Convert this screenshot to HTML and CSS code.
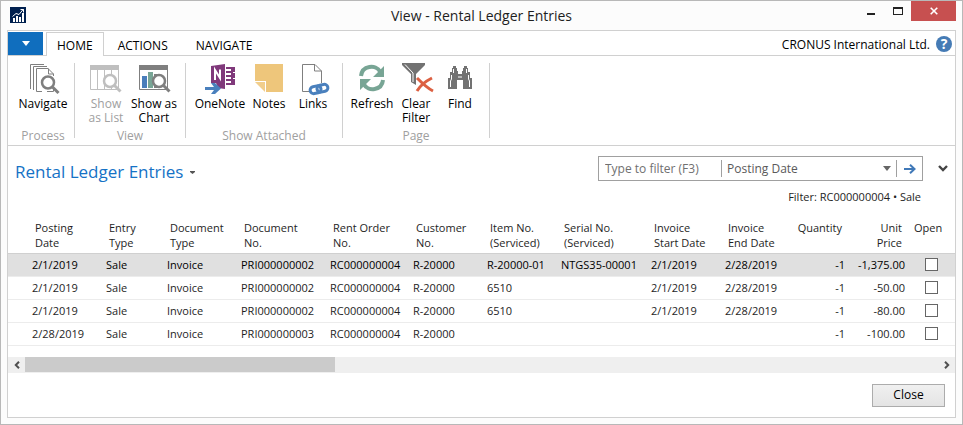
FILE: index.html
```html
<!DOCTYPE html>
<html lang="en">
<head>
<meta charset="utf-8">
<title>View - Rental Ledger Entries</title>
<link rel="stylesheet" href="styles.css">
</head>
<body>
<div class="window">
  <header class="titlebar">
    <svg class="app-icon" width="16" height="16" viewBox="0 0 16 16" aria-hidden="true">
      <rect width="16" height="16" fill="#00204f"/>
      <path d="M3 11h2v4H3zM6 9h2v6H6zM9 10h2v5H9zM12 6h2v9h-2z" fill="#fff"/>
      <path d="M2.500 9.500L6 6.500l3 1L13.500 2M10.500 2.500h3v3" fill="none" stroke="#fff" stroke-width="1"/>
    </svg>
    <h1 class="window-title">View - Rental Ledger Entries</h1>
    <div class="window-controls">
      <button class="wbtn" aria-label="Minimize"><svg width="10" height="10" viewBox="0 0 10 10"><path d="M1 7h8v2H1z" fill="#222"/></svg></button>
      <button class="wbtn" aria-label="Maximize"><svg width="10" height="10" viewBox="0 0 10 10"><path d="M0 1h10v8H0zM1 3v5h8V3z" fill="#222" fill-rule="evenodd"/></svg></button>
      <button class="wbtn wbtn-close" aria-label="Close window"><svg width="8" height="8" viewBox="0 0 8 8"><path d="M.7.7l6.600 6.600M7.300.7L.7 7.300" stroke="#fff" stroke-width="1.600"/></svg></button>
    </div>
  </header>

  <div class="panel">
    <nav class="tabs">
      <button class="app-menu" aria-label="Application menu"><svg width="8" height="5" viewBox="0 0 8 5"><path d="M0 0h8L4 5z" fill="#fff"/></svg></button>
      <button class="tab tab-active">HOME</button>
      <button class="tab">ACTIONS</button>
      <button class="tab">NAVIGATE</button>
      <span class="company">CRONUS International Ltd.</span>
      <button class="help" aria-label="Help">?</button>
    </nav>

    <div class="ribbon">
      <section class="group">
        <div class="group-buttons">
          <button class="rbtn rbtn-wide">
            <svg width="32" height="32" viewBox="0 0 32 32" fill="none" stroke="#7f7f7f">
              <path d="M3.500 27V2.500H17M6.500 28V4.500H20"/>
              <path d="M15 29.500H9.500v-23H21l5.500 5.500v2M26.500 26v3.500H20"/>
              <path d="M21.500 6.500V12h5"/>
              <circle cx="21" cy="20.500" r="6" stroke-width="2.500" fill="#fff"/>
              <path d="M25.500 25l6 6" stroke-width="3"/>
            </svg>
            <span>Navigate</span>
          </button>
        </div>
        <h2 class="group-name">Process</h2>
      </section>

      <section class="group">
        <div class="group-buttons">
          <button class="rbtn rbtn-wide" disabled>
            <svg width="32" height="32" viewBox="0 0 32 32" fill="none" stroke="#bfbfbf">
              <path d="M.5 7v20.500h28V7M7.500 7v20M14.500 7v20M21.500 7v20"/>
              <path d="M0 3h29v5H0z" fill="#bfbfbf" stroke="none"/>
              <circle cx="20" cy="19" r="6" stroke-width="2.500" fill="#fff"/>
              <path d="M24.500 23.500l6 6" stroke-width="3"/>
            </svg>
            <span>Show<br>as List</span>
          </button>
          <button class="rbtn rbtn-wide">
            <svg width="32" height="32" viewBox="0 0 32 32" fill="none" stroke="#7f7f7f">
              <path d="M1.500 7v20.500h28V7"/>
              <path d="M1 3h29v5H1z" fill="#7f7f7f" stroke="none"/>
              <path d="M4 14h5v12H4z" fill="#4a7ebb" stroke="none"/>
              <path d="M10 10h5v16h-5z" fill="#78a595" stroke="none"/>
              <path d="M16 12h5v14h-5z" fill="#7f7f7f" stroke="none"/>
              <circle cx="21" cy="19" r="6" stroke-width="2.500" fill="#fff"/>
              <path d="M25.500 23.500l6 6" stroke-width="3"/>
            </svg>
            <span>Show as<br>Chart</span>
          </button>
        </div>
        <h2 class="group-name">View</h2>
      </section>

      <section class="group">
        <div class="group-buttons">
          <button class="rbtn rbtn-onenote">
            <svg width="32" height="32" viewBox="0 0 32 32">
              <path d="M7 4l14-2v25l-7-1-2-5H7z" fill="#80397b"/>
              <path d="M22 5h9v18h-9v-2h5v-2h-5v-2h5v-2h-5v-2h5v-2h-5V9h5V7h-5z" fill="#80397b"/>
              <path d="M29 10h2v1h-2zM29 16h2v1h-2z" fill="#fff"/>
              <path d="M11 18V8l5 8V7.500" fill="none" stroke="#fff" stroke-width="2"/>
              <path d="M1 25h9l-3-4h4l6 5.500-6 5.500H7l3-4H1z" fill="#4a80bd"/>
            </svg>
            <span>OneNote</span>
          </button>
          <button class="rbtn">
            <svg width="32" height="32" viewBox="0 0 32 32">
              <path d="M2 2h28v28H13V19H2z" fill="#eec67b"/>
              <path d="M2 20h10v10z" fill="#f1ce8c"/>
            </svg>
            <span>Notes</span>
          </button>
          <button class="rbtn">
            <svg width="32" height="32" viewBox="0 0 32 32" fill="none">
              <path d="M12 29.500H5.500v-27H18l6.500 6.500v12M17.500 2.500V9h7" stroke="#7f7f7f"/>
              <g stroke="#4a80bd" stroke-width="3" transform="rotate(-12 22 27)">
                <rect x="13" y="23.500" width="11" height="7" rx="3.500"/>
                <rect x="20" y="23.500" width="11" height="7" rx="3.500"/>
              </g>
            </svg>
            <span>Links</span>
          </button>
        </div>
        <h2 class="group-name">Show Attached</h2>
      </section>

      <section class="group">
        <div class="group-buttons">
          <button class="rbtn">
            <svg width="32" height="32" viewBox="0 0 32 32" fill="none">
              <path d="M5 14C6 3.500 20 2 24 9.500M27 18C26 28.500 12 30 8 22.500" stroke="#78a595" stroke-width="4"/>
              <path d="M28 4v11H17zM4 28V17h11z" fill="#78a595"/>
            </svg>
            <span>Refresh</span>
          </button>
          <button class="rbtn">
            <svg width="32" height="32" viewBox="0 0 32 32" fill="none">
              <path d="M2 1h23v2l-9 9v11l-5-3v-8L2 3z" fill="#727272"/>
              <path d="M5 2.500l8 8.500v9" stroke="#fff"/>
              <path d="M17 16c4 4 10 10 16 13M32 16c-6 3-12 8-15 13" stroke="#dc6042" stroke-width="3"/>
            </svg>
            <span>Clear<br>Filter</span>
          </button>
          <button class="rbtn">
            <svg width="32" height="32" viewBox="0 0 32 32">
              <path d="M9 4h3v2h1v3h1v3h4V9h1V6h1V4h3v2h1v4h2v6h2v11h-9v-9h-6v9H4V16h2v-6h2V6h1z" fill="#727272"/>
              <path d="M9.500 7v4M22.500 7v4M7.500 13v4l-1 2v6M24.500 13v4l1 2v6M14 15h4" fill="none" stroke="#fff"/>
            </svg>
            <span>Find</span>
          </button>
        </div>
        <h2 class="group-name">Page</h2>
      </section>
    </div>

    <div class="page-head">
      <button class="page-title">Rental Ledger Entries
        <svg width="5" height="3" viewBox="0 0 5 3"><path d="M0 0h5v1L2.500 3 0 1z" fill="#555"/></svg>
      </button>
      <div class="filter-area">
        <form class="filter-box">
          <input class="filter-input" type="text" placeholder="Type to filter (F3)" aria-label="Filter value">
          <span class="filter-field">
            <select class="filter-select" aria-label="Filter field"><option>Posting Date</option></select>
            <svg width="8" height="5" viewBox="0 0 8 5"><path d="M0 0h8L4 5z" fill="#666"/></svg>
          </span>
          <button class="filter-go" type="button" aria-label="Apply filter"><svg width="12" height="10" viewBox="0 0 12 10" fill="none" stroke="#4079b8" stroke-width="2"><path d="M0 5h10M6 .8L10.500 5 6 9.200"/></svg></button>
        </form>
        <button class="expand" aria-label="Expand filter pane"><svg width="10" height="7" viewBox="0 0 10 7" fill="none" stroke="#444" stroke-width="2.400"><path d="M1 1l4 4 4-4"/></svg></button>
        <p class="filter-text">Filter: RC000000004 • Sale</p>
      </div>
    </div>

    <table class="entries">
      <colgroup>
        <col class="c-mark"><col class="c-date"><col class="c-entry"><col class="c-date"><col class="c-docno"><col class="c-order"><col class="c-date"><col class="c-date"><col class="c-serial"><col class="c-date"><col class="c-end"><col class="c-qty"><col class="c-price"><col>
      </colgroup>
      <thead>
        <tr><td></td><th>Posting<br>Date</th><th>Entry<br>Type</th><th>Document<br>Type</th><th>Document<br>No.</th><th>Rent Order<br>No.</th><th>Customer<br>No.</th><th>Item No.<br>(Serviced)</th><th>Serial No.<br>(Serviced)</th><th>Invoice<br>Start Date</th><th>Invoice<br>End Date</th><th class="num">Quantity</th><th class="num">Unit<br>Price</th><th>Open</th></tr>
      </thead>
      <tbody>
        <tr class="selected"><td></td><td>2/1/2019</td><td>Sale</td><td>Invoice</td><td>PRI000000002</td><td>RC000000004</td><td>R-20000</td><td>R-20000-01</td><td>NTGS35-00001</td><td>2/1/2019</td><td>2/28/2019</td><td class="num">-1</td><td class="num">-1,375.00</td><td class="check"><input type="checkbox" aria-label="Open"></td></tr>
        <tr><td></td><td>2/1/2019</td><td>Sale</td><td>Invoice</td><td>PRI000000002</td><td>RC000000004</td><td>R-20000</td><td>6510</td><td></td><td>2/1/2019</td><td>2/28/2019</td><td class="num">-1</td><td class="num">-50.00</td><td class="check"><input type="checkbox" aria-label="Open"></td></tr>
        <tr><td></td><td>2/1/2019</td><td>Sale</td><td>Invoice</td><td>PRI000000002</td><td>RC000000004</td><td>R-20000</td><td>6510</td><td></td><td>2/1/2019</td><td>2/28/2019</td><td class="num">-1</td><td class="num">-80.00</td><td class="check"><input type="checkbox" aria-label="Open"></td></tr>
        <tr><td></td><td>2/28/2019</td><td>Sale</td><td>Invoice</td><td>PRI000000003</td><td>RC000000004</td><td>R-20000</td><td></td><td></td><td></td><td></td><td class="num">-1</td><td class="num">-100.00</td><td class="check"><input type="checkbox" aria-label="Open"></td></tr>
      </tbody>
    </table>

    <div class="hscroll">
      <button class="scroll-arrow" aria-label="Scroll left"><svg width="6" height="8" viewBox="0 0 6 8" fill="none" stroke="#505050" stroke-width="2"><path d="M5 .8L1.800 4 5 7.200"/></svg></button>
      <div class="track"><div class="thumb"></div></div>
      <button class="scroll-arrow" aria-label="Scroll right"><svg width="6" height="8" viewBox="0 0 6 8" fill="none" stroke="#505050" stroke-width="2"><path d="M1 .8L4.200 4 1 7.200"/></svg></button>
    </div>

    <footer class="footer"><button class="close-btn">Close</button></footer>
  </div>
</div>
</body>
</html>
```
FILE: styles.css
```css
* { box-sizing: border-box; }

body {
  margin: 0;
  background: #fcfcfc;
  color: #1e1e1e;
  font: 12px/16px "Open Sans", "Noto Sans", sans-serif;
}

button, input, select {
  margin: 0;
  padding: 0;
  border: 0;
  background: none;
  color: inherit;
  font: inherit;
}

svg { display: block; flex: none; }

.window {
  border: 1px solid #b8b8b8;
  padding: 0 6px 6px;
  background: #fcfcfc;
}

/* Title bar */
.titlebar {
  display: grid;
  grid-template-columns: 1fr auto 1fr;
  height: 29px;
}
.app-icon { margin: 6px 0 0 3px; }
.window-title {
  margin: 0;
  font-size: 14px;
  line-height: 30px;
  font-weight: 400;
}
.window-controls { display: flex; justify-content: flex-end; align-items: flex-start; }
.wbtn {
  display: flex;
  align-items: center;
  justify-content: center;
  width: 27px;
  height: 20px;
}
.wbtn-close { width: 45px; background: #c75050; }

.panel {
  border: 1px solid #d0d0d0;
  background: #fff;
}

/* Tabs */
.tabs {
  display: flex;
  align-items: stretch;
  height: 25px;
  padding-top: 1px;
  border-bottom: 1px solid #d0d0d0;
  color: #000;
}
.app-menu {
  display: flex;
  align-items: center;
  justify-content: center;
  width: 35px;
  margin-right: 3px;
  background: #106ebe;
}
.tab { padding: 4px 14px 0; }
.tab-active {
  margin-bottom: -1px;
  padding: 2px 10px 0;
  border: 1px solid #d0d0d0;
  border-bottom: 0;
  background: #fff;
}
.company { margin-left: auto; line-height: 26px; }
.help {
  align-self: center;
  width: 16px;
  height: 16px;
  margin: 0 3px 0 6px;
  border-radius: 50%;
  background: #457bb5;
  color: #fff;
  font-weight: 700;
  font-size: 14px;
  line-height: 16px;
}

/* Ribbon */
.ribbon {
  display: flex;
  height: 90px;
  padding: 7px 0 7px 4px;
  border-bottom: 1px solid #d0d0d0;
}
.group {
  display: flex;
  flex-direction: column;
  justify-content: space-between;
  padding: 0 7px;
  border-right: 1px solid #d0d0d0;
}
.group-buttons { display: flex; }
.rbtn {
  display: flex;
  flex-direction: column;
  align-items: center;
  width: 44px;
  margin-top: -1px;
  color: #000;
  line-height: 14px;
  white-space: nowrap;
}
.rbtn svg { margin-bottom: 3px; overflow: visible; }
.rbtn-wide { width: 48px; }
.rbtn-onenote { width: 54px; }
.rbtn:disabled { color: #a0a0a0; }
.group-name {
  margin: 0 0 -4px;
  color: #a0a0a0;
  font-size: 12px;
  line-height: 12px;
  font-weight: 400;
  text-align: center;
}

/* Page heading and filter */
.page-head {
  display: flex;
  justify-content: space-between;
  padding: 10px 6px 0 7px;
}
.page-title {
  display: flex;
  align-items: center;
  gap: 7px;
  height: 32px;
  color: #1572c6;
  font-size: 17px;
}
.filter-area {
  display: grid;
  grid-template-columns: 325px 25px;
  align-items: center;
  column-gap: 1px;
}
.filter-box {
  display: flex;
  height: 25px;
  padding: 3px 0;
  border: 1px solid #a0a0a0;
  color: #5a5a5a;
}
.filter-input { width: 122px; padding: 0 6px; font-size: 12px; }
.filter-input::placeholder { color: #707070; opacity: 1; }
.filter-field {
  display: flex;
  flex: 1;
  align-items: center;
  padding: 0 5px;
  border: solid #a0a0a0;
  border-width: 0 1px;
}
.filter-select { flex: 1; appearance: none; font-size: 12px; }
.filter-go { display: flex; align-items: center; justify-content: center; width: 25px; }
.expand { display: flex; justify-content: center; padding-left: 13px; }
.filter-text {
  grid-column: 1;
  margin: 8px 2px 0 0;
  font-size: 11px;
  text-align: right;
}

/* Entries table */
.entries {
  width: 100%;
  margin-top: 15px;
  border-collapse: collapse;
  table-layout: fixed;
  font-size: 11px;
}
.c-mark { width: 21px; }
.c-date { width: 74px; }
.c-entry { width: 61px; }
.c-docno { width: 89px; }
.c-order { width: 83px; }
.c-serial { width: 90px; }
.c-end { width: 70px; }
.c-qty { width: 56px; }
.c-price { width: 60px; }
.entries td, .entries th {
  padding: 0 0 0 3px;
  text-align: left;
  font-weight: 400;
  white-space: nowrap;
}
.entries th {
  height: 33px;
  padding-left: 6px;
  line-height: 15px;
  vertical-align: top;
}
.entries tbody tr { height: 23px; border-bottom: 1px solid #ececec; }
.entries tbody .selected { border-top: 1px solid #d0d0d0; background: #e0e0e0; color: #000; }
.entries .num { padding: 0 3px 0 0; text-align: right; }
.entries th.num { padding-right: 6px; }
.entries .check { padding-left: 17px; }
.check input {
  display: block;
  appearance: none;
  width: 13px;
  height: 13px;
  border: 1px solid #666;
  background: #fff;
}

/* Horizontal scroll bar */
.hscroll {
  display: flex;
  height: 16px;
  margin-top: 11px;
  background: #efefef;
}
.scroll-arrow { display: flex; align-items: center; justify-content: center; width: 17px; }
.track { flex: 1; padding-bottom: 1px; }
.thumb { width: 34%; height: 100%; background: #cbcbcb; }

.footer { display: flex; justify-content: flex-end; padding: 11px 10px 10px; }
.close-btn {
  width: 73px;
  height: 23px;
  border: 1px solid #acacac;
  background: linear-gradient(#f0f0f0, #e4e4e4);
  color: #000;
}
```
